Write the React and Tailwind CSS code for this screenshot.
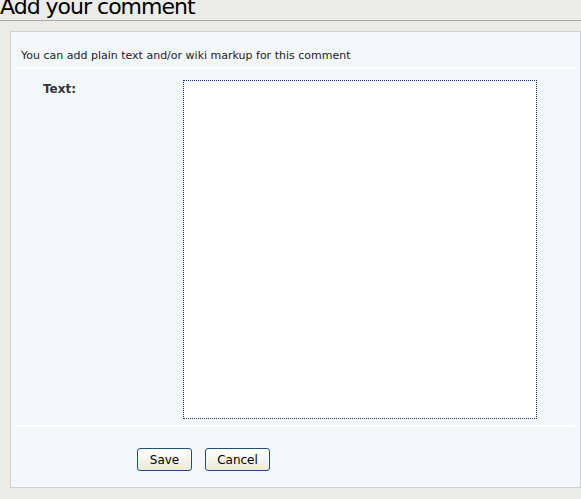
export default function App() {
  const ui = { fontFamily: '"DejaVu Sans", Verdana, sans-serif' }

  return (
    <div className="min-h-[499px] overflow-hidden bg-[#ebebe7] text-[#222]" style={ui}>
      <h1 className="-mt-[6px] h-[27px] border-b border-[#aba7ab] pl-0 text-[22px] leading-[26px] tracking-[-1px] text-black">
        Add your comment
      </h1>

      <div className="ml-[10px] mr-[0px] mt-[10px] h-[457px] border border-[#cfcfcf] bg-[#f2f7fa]">
        <p className="pl-[10px] pt-[17px] pb-[4px] text-[11px] leading-[14px] text-[#222]">
          You can add plain text and/or wiki markup for this comment
        </p>
        <div className="mx-[5px] h-[2px] bg-white" />

        <div className="flex pt-[11px]">
          <label className="w-[172px] pl-[32px] pt-[2px] text-[12px] font-bold leading-[14px] text-[#333]">
            Text:
          </label>
          <textarea className="h-[339px] w-[354px] resize-none border border-dotted border-[#1a2f8a] bg-white outline-none" />
        </div>

        <div className="mx-[5px] mt-[6px] h-[2px] bg-white" />

        <div className="flex gap-[13px] pl-[126px] pt-[21px]">
          <button className="h-[23px] w-[55px] rounded-[3px] border border-[#1c4f82] bg-gradient-to-b from-white to-[#ece9d8] text-[12px] leading-[20px] text-black">
            Save
          </button>
          <button className="h-[23px] w-[65px] rounded-[3px] border border-[#1c4f82] bg-gradient-to-b from-white to-[#ece9d8] text-[12px] leading-[20px] text-black">
            Cancel
          </button>
        </div>
      </div>
    </div>
  )
}
